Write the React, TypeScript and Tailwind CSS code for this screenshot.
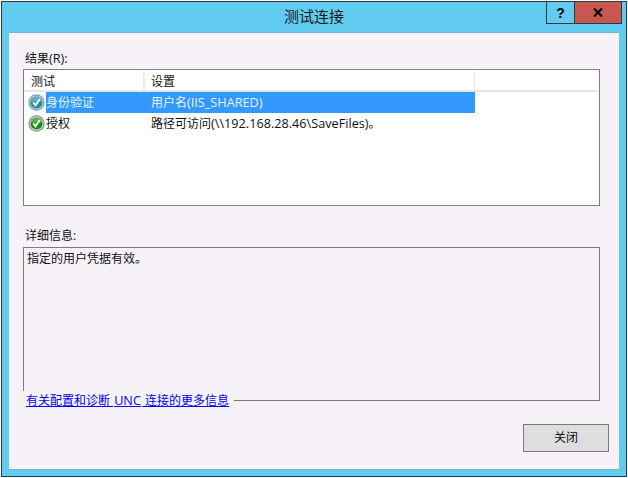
function CheckIcon({ selected }: { selected?: boolean }) {
  return (
    <svg width="17" height="17" viewBox="0 0 17 17" className="shrink-0">
      <circle cx="8.5" cy="8.5" r="8.2" fill={selected ? "#7f9fb8" : "#8e8e8e"} />
      <circle cx="8.5" cy="8.5" r="7" fill={selected ? "#b7d3e2" : "#dcdcdc"} />
      <circle cx="8.5" cy="8.5" r="6" fill={selected ? "#2a8a9c" : "#0c9010"} />
      <path d="M3 7.5a5.6 5.6 0 0 1 11 0z" fill="#ffffff" opacity={0.3} />
      <path d="M5.2 8.4l2.3 3L11.8 5" fill="none" stroke="#ffffff" strokeWidth="1.9" />
    </svg>
  );
}

const font = "font-['Open_Sans','Noto_Sans_CJK_SC',sans-serif]";

function L({ children }: { children: React.ReactNode }) {
  return <span className="text-[12.7px]">{children}</span>;
}

export default function App() {
  return (
    <div className={`w-[628px] h-[478px] bg-[#fafafa] ${font} text-[12px] leading-[16px] text-[#111] overflow-hidden pt-px pl-px`}>
      <div className="w-[626px] h-[476px] bg-[#62cbf0] border border-[#2e3a40] flex flex-col">
        <div className="relative h-[30px] shrink-0 flex items-center justify-center">
          <span className="text-[15px] leading-[20px] text-[#1a1a1a] mb-[2px]">测试连接</span>
          <div className="absolute top-[-1px] right-[4px] flex h-[23px]">
            <div className="w-[29px] border border-[#2e3a40] flex items-center justify-center text-black font-bold text-[14px] font-['Liberation_Sans',sans-serif]">?</div>
            <div className="w-[47px] border border-l-0 border-[#2e3a40] bg-[#c75850] flex items-center justify-center">
              <svg width="10" height="9" viewBox="0 0 10 9"><path d="M1 .5l8 8M9 .5l-8 8" stroke="#0c0c0c" strokeWidth="2.2" fill="none" /></svg>
            </div>
          </div>
        </div>
        <div className="ml-[7px] w-[610px] h-[438px] bg-[#f6f2f7] border-t border-[#6fb9d6] border-b border-[#6fb9d6] px-[14px] flex flex-col">
          <div className="mt-[17px] ml-[2px] h-[19px]">结果<L>(R):</L></div>
          <div className="w-[577px] h-[137px] bg-white border border-[#7f7f87] p-px">
            <div className="flex h-[21px] border-b-2 border-[#e6e6e6]">
              <div className="w-[120px] pl-[6px] pt-[3px] border-r-2 border-[#ececec]">测试</div>
              <div className="w-[330px] pl-[6px] pt-[3px] border-r border-[#e6e6e6]">设置</div>
            </div>
            <div className="relative flex h-[21px] items-center w-[450px]">
              <div className="absolute left-[3px] top-[2px]"><CheckIcon selected /></div>
              <div className="ml-[21px] w-[429px] h-full bg-[#3399ff] text-[#eaf4ff] flex items-center">
                <div className="w-[100px]">身份验证</div>
                <div className="pl-[5px]">用户名<L>(IIS_SHARED)</L></div>
              </div>
            </div>
            <div className="relative flex h-[21px] items-center">
              <div className="absolute left-[3px] top-[2px]"><CheckIcon /></div>
              <div className="ml-[21px] w-[100px]">授权</div>
              <div className="pl-[5px]">路径可访问<L>(\\192.168.28.46\SaveFiles)</L>。</div>
            </div>
          </div>
          <div className="mt-[22px] ml-[2px] h-[19px]">详细信息:</div>
          <div className="relative w-[577px] h-[154px] border border-[#7f7a80] pl-[3px] pt-[3px]">
            <div className="text-[#111]">指定的用户凭据有效。</div>
            <a className="absolute left-[-1px] bottom-[-11px] bg-[#f6f2f7] pl-[3px] pr-[5px] h-[20px] leading-[18px] text-[#0000ff] underline" href="#">有关配置和诊断 <L><span className="mx-px">UNC</span></L> 连接的更多信息</a>
          </div>
          <div className="flex justify-end mt-[23px] mr-[-4px]">
            <div className="w-[86px] h-[28px] bg-[#dedede] border border-[#7a7a7a] flex items-center justify-center text-[#111]">关闭</div>
          </div>
        </div>
      </div>
    </div>
  );
}
